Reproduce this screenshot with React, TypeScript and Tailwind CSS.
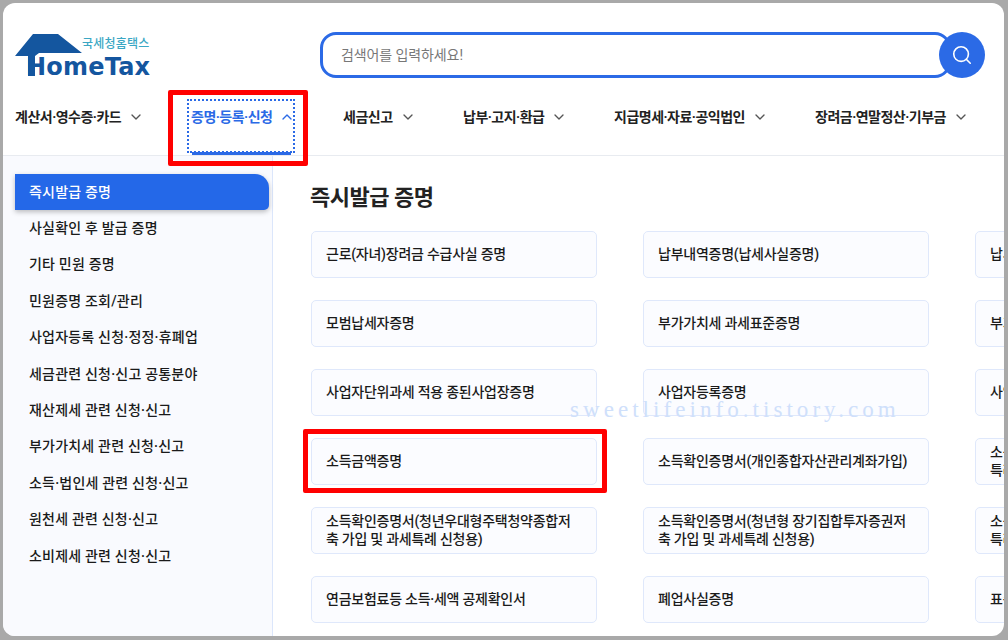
import { ChevronDown, ChevronUp, Search } from 'lucide-react';

const FONT = "font-['Roboto','Noto_Sans_CJK_KR',sans-serif]";

const NAV = [
  { label: '계산서·영수증·카드', width: 'w-[165px]' },
  { label: '증명·등록·신청', width: 'w-[163px]', active: true },
  { label: '세금신고', width: 'w-[120px]' },
  { label: '납부·고지·환급', width: 'w-[151px]' },
  { label: '지급명세·자료·공익법인', width: 'w-[201px]' },
  { label: '장려금·연말정산·기부금', width: 'w-[160px]' },
];

const SIDE = [
  '즉시발급 증명',
  '사실확인 후 발급 증명',
  '기타 민원 증명',
  '민원증명 조회/관리',
  '사업자등록 신청·정정·휴폐업',
  '세금관련 신청·신고 공통분야',
  '재산제세 관련 신청·신고',
  '부가가치세 관련 신청·신고',
  '소득·법인세 관련 신청·신고',
  '원천세 관련 신청·신고',
  '소비제세 관련 신청·신고',
];

const ROWS = [
  ['근로(자녀)장려금 수급사실 증명', '납부내역증명(납세사실증명)', '납세증명서'],
  ['모범납세자증명', '부가가치세 과세표준증명', '부가가치세 면세사업자 수입금액증명'],
  ['사업자단위과세 적용 종된사업장증명', '사업자등록증명', '사업자등록 사실여부'],
  ['소득금액증명', '소득확인증명서(개인종합자산관리계좌가입)', '소득확인증명서(장기투자\n특례 신청용)'],
  [
    '소득확인증명서(청년우대형주택청약종합저축 가입 및 과세특례 신청용)',
    '소득확인증명서(청년형 장기집합투자증권저축 가입 및 과세특례 신청용)',
    '소득확인증명서(국내투자\n특례 신청용)',
  ],
  ['연금보험료등 소득·세액 공제확인서', '폐업사실증명', '표준재무제표증명'],
];

export default function App() {
  return (
    <div className={`relative w-[1008px] h-[640px] overflow-hidden bg-[#a9a9a9] pt-[3px] pl-[3px] pr-[4px] pb-[4px] ${FONT}`}>
      <div className="flex flex-col h-full bg-white rounded-[12px] overflow-hidden">
        {/* Top: logo + search */}
        <div className="flex items-end h-[75px] pl-[12px] shrink-0">
          <div className="relative w-[136px] h-[44px] mb-[-1px]">
            <svg className="absolute left-0 -top-[1px]" width="72" height="44" viewBox="0 0 72 44">
              <path d="M0 22 L18 0 H43 L67 19 H24 L20 22 V42 H13 V22 Z" fill="#14569f" />
            </svg>
            <span className="absolute left-[67px] top-[1px] text-[12px] leading-[16px] font-medium tracking-[0.2px] text-[#3ba7c4] whitespace-nowrap">국세청홈택스</span>
            <span className="absolute left-[11px] top-[18px] text-[24px] leading-[28px] font-bold tracking-[0.2px] text-[#14569f] font-['DejaVu_Sans',sans-serif]">HomeTax</span>
          </div>
          <div className="flex items-center ml-[169px]">
            <div className="flex items-center w-[631px] h-[46px] border-[3px] border-[#2b6ae6] rounded-[16px] pl-[18px] text-[14px] tracking-[-0.1px] text-[#777]">
              검색어를 입력하세요!
            </div>
            <div className="flex items-center justify-center w-[46px] h-[46px] -ml-[12px] rounded-full bg-[#2b6ae6]">
              <Search size={22} color="#fff" strokeWidth={1.75} />
            </div>
          </div>
        </div>

        {/* Main nav */}
        <div className="flex h-[78px] pl-[12px] border-b border-[#e8ebf0] shrink-0">
          {NAV.map((item) => (
            <div key={item.label} className={`relative flex items-start ${item.width} pt-[29px] text-[14px] leading-[20px] font-semibold tracking-[-0.5px] whitespace-nowrap ${item.active ? 'text-[#2b6ae6] pl-[11px]' : 'text-[#222]'}`}>
              <span>{item.label}</span>
              {item.active ? <ChevronUp size={16} className="ml-[7px] mt-[2px]" /> : <ChevronDown size={16} className="ml-[7px] mt-[2px] text-[#555]" />}
              {item.active && (
                <>
                  <div className="absolute left-[7px] top-[21px] w-[108px] h-[54px] border-2 border-dotted border-[#2b6ae6]" />
                  <div className="absolute left-[12px] bottom-0 w-[99px] h-[3px] bg-[#2b6ae6]" />
                </>
              )}
            </div>
          ))}
        </div>

        <div className="flex flex-1 min-h-0">
          {/* Side menu */}
          <div className="flex flex-col w-[270px] shrink-0 pt-[18px] pl-[12px] pr-[3px] bg-[#f9fafe] border-r border-[#dbe6fb]">
            {SIDE.map((label, i) => (
              <div
                key={label}
                className={`flex items-center h-[36.4px] pl-[14px] text-[14px] font-medium tracking-[0.2px] ${i === 0 ? 'bg-[#2468e8] text-white rounded-tr-[14px] rounded-br-[5px] shadow-[0_2px_5px_rgba(0,0,0,0.25)]' : 'text-[#1a1a1a]'}`}
              >
                {label}
              </div>
            ))}
          </div>

          {/* Content */}
          <div className="flex-1 min-w-0 pl-[38px] pt-[28px] overflow-hidden">
            <h2 className="-ml-[1px] text-[22px] leading-[28px] font-bold tracking-[-0.5px] text-[#222]">즉시발급 증명</h2>
            <div className="flex flex-col gap-[22px] mt-[19px]">
              {ROWS.map((row) => (
                <div key={row[0]} className="flex gap-[46px] w-[900px]">
                  {row.map((text) => (
                    <div key={text} className="flex items-center w-[286px] h-[47px] pl-[14px] pr-[16px] pb-[2px] shrink-0 rounded-[5px] border border-[#dfe8fb] bg-[#fbfcff] text-[14px] leading-[18px] font-medium tracking-[-0.25px] text-[#1a1a1a] whitespace-pre-line">
                      {text}
                    </div>
                  ))}
                </div>
              ))}
            </div>
          </div>
        </div>
      </div>

      {/* Blog watermark and red callouts sit over the page */}
      <span className="absolute left-[570px] top-[397px] text-[23px] leading-[26px] tracking-[4.05px] text-[#cfe0fb] font-['Liberation_Serif',serif]">sweetlifeinfo.tistory.com</span>
      <div className="absolute left-[168px] top-[90px] w-[140px] h-[76px] border-[5px] border-[#f00] rounded-[2px]" />
      <div className="absolute left-[303px] top-[429px] w-[304px] h-[64px] border-[5px] border-[#f00] rounded-[2px]" />
    </div>
  );
}
